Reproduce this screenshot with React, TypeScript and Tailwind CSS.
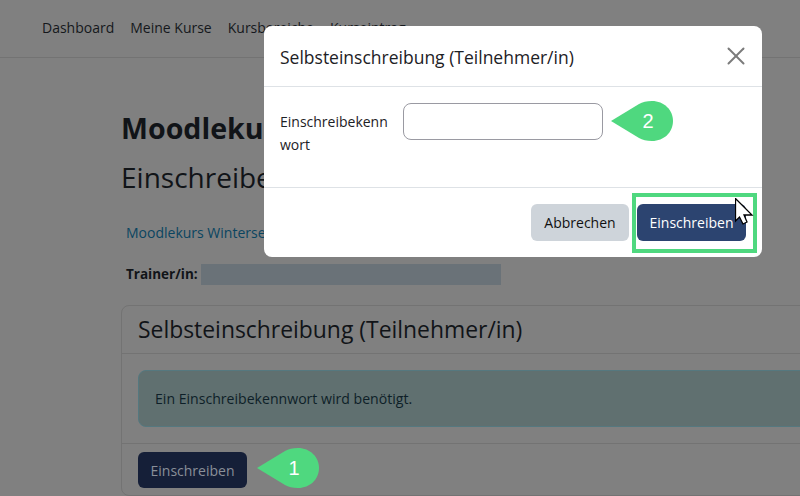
import { X } from "lucide-react";

function Marker({ n, className }: { n: string; className: string }) {
  return (
    <div className={`absolute w-[62px] h-[40px] ${className}`}>
      <svg width="62" height="40" viewBox="0 0 62 40" className="absolute left-0 top-0">
        <path d="M0 20 L28 3 Q33 0 41 0 C53 0 62 9 62 20 C62 31 53 40 41 40 Q33 40 28 37 Z" fill="#4fd87f" />
      </svg>
      <span className="absolute left-[30px] top-[7px] w-[14px] text-center text-[20px] leading-[26px] text-white font-['Liberation_Sans',sans-serif]">
        {n}
      </span>
    </div>
  );
}

function PageBehind() {
  return (
    <div className="w-[800px] h-[496px] overflow-hidden bg-[#808080] text-[#111418]">
      {/* nav */}
      <nav className="h-[58px] border-b border-[#737373] pl-[42px] pt-[17px] flex gap-4 text-[14px] leading-[22px] text-[#15181c]">
        <span>Dashboard</span>
        <span>Meine Kurse</span>
        <span>Kursbereiche</span>
        <span>Kurseintrag</span>
      </nav>
      <div className="pl-[121px]">
        <h1 className="mt-[52px] text-[28.6px] leading-[36px] font-bold whitespace-nowrap">Moodlekurs Wintersemester</h1>
        <h2 className="mt-[13px] text-[28px] leading-[36px] whitespace-nowrap">Einschreibeoptionen</h2>
        <a className="block mt-[27px] ml-[5px] text-[14px] leading-[22px] text-[#0a4560] whitespace-nowrap">Moodlekurs Wintersemester</a>
        <div className="mt-[19px] ml-[5px] flex items-center h-[22px] text-[13.5px] font-bold">
          <span>Trainer/in:</span>
          <div className="ml-[3px] w-[300px] h-[21px] bg-[#6a7278]" />
        </div>
        {/* card */}
        <div className="mt-[20px] w-[720px] h-[191px] border border-[#737373] rounded-lg">
          <div className="h-[48px] border-b border-[#737373] pl-4 flex items-center text-[22.9px] leading-[28px]">
            Selbsteinschreibung (Teilnehmer/in)
          </div>
          <div className="h-[90px] border-b border-[#737373] px-4 pt-4">
            <div className="h-[57px] rounded-lg border border-[#55787f] bg-[#607070] pl-4 flex items-center text-[14.1px] text-[#0e1f28]">
              Ein Einschreibekennwort wird benötigt.
            </div>
          </div>
          <div className="px-4 pt-2">
            <button className="w-[109px] h-[36px] rounded-md bg-[#151f38] text-[14px] text-[#8a8f99]">Einschreiben</button>
          </div>
        </div>
      </div>
    </div>
  );
}

export default function App() {
  return (
    <div className="relative w-[800px] h-[496px] overflow-hidden font-['Open_Sans',sans-serif]">
      <PageBehind />
      <Marker n="1" className="left-[257px] top-[448px]" />

      {/* modal */}
      <div className="absolute left-[264px] top-[26px] w-[498px] h-[231px] bg-white rounded-lg flex flex-col text-[#1d2125]">
        <div className="h-[61px] border-b border-[#dee2e6] pl-4 pr-4 flex items-center justify-between">
          <span className="text-[17.5px] leading-[24px] mt-[1px]">Selbsteinschreibung (Teilnehmer/in)</span>
          <X size={30} strokeWidth={1.6} className="text-[#7b7b7b] -mr-[5px]" />
        </div>
        <div className="h-[101px] border-b border-[#dee2e6] pl-4 pt-[16px] flex">
          <label className="w-[123px] mt-[7px] text-[14px] leading-[23px]">
            Einschreibekenn
            <br />
            wort
          </label>
          <input className="w-[200px] h-[37px] border border-[#9a9aa2] rounded-lg" />
        </div>
        <div className="flex-1 flex justify-end items-start pt-[16px] pr-4 gap-2">
          <button className="w-[98px] h-[37px] rounded-md bg-[#ced4da] text-[14px] text-[#111]">Abbrechen</button>
          <button className="w-[109px] h-[37px] rounded-md bg-[#2c4470] text-[14px] text-white">Einschreiben</button>
        </div>
      </div>

      {/* annotations */}
      <Marker n="2" className="left-[611px] top-[101px]" />
      <div className="absolute left-[632px] top-[193px] w-[125px] h-[60px] border-[4px] border-[#4fd87f]" />
      <svg width="20" height="30" viewBox="0 0 20 30" className="absolute left-[735px] top-[198px]">
        <path d="M0.5 0.5 L0.5 23 L4.5 19 L8 26 L12 24 L9 17 L17 17 Z" fill="white" stroke="black" strokeWidth="1.3" />
      </svg>
    </div>
  );
}
